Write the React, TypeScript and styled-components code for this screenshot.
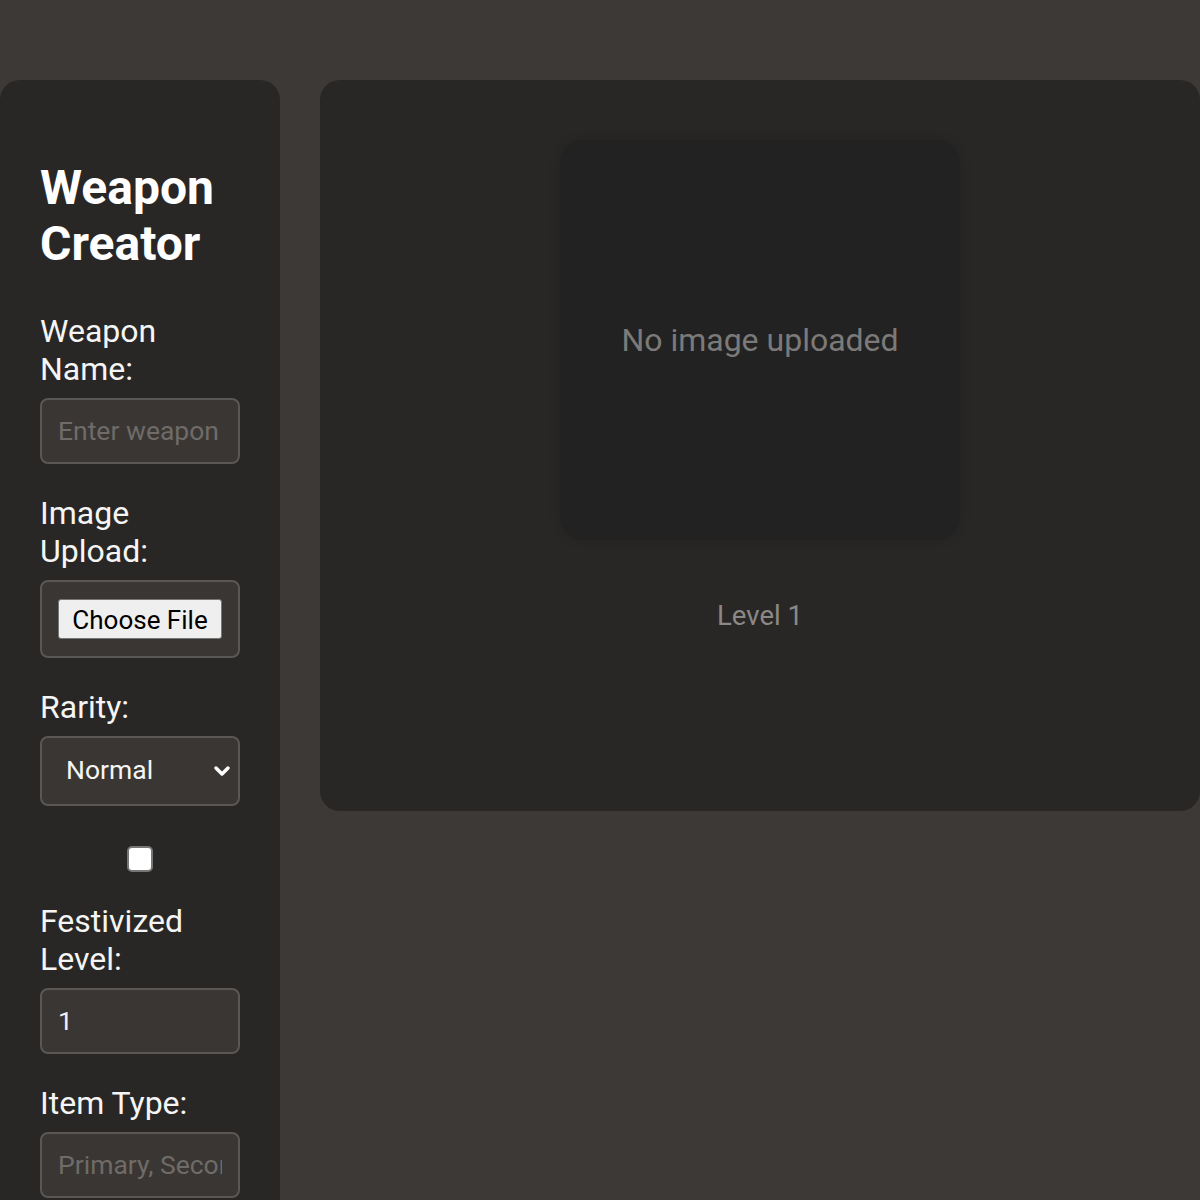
import styled, { createGlobalStyle } from "styled-components";
import { ChevronDown } from "lucide-react";

const GlobalStyle = createGlobalStyle`
  * {
    box-sizing: border-box;
  }
  body {
    margin: 0;
    background: #3d3936;
    font-family: Roboto, "Liberation Sans", sans-serif;
    color: #f5f5f5;
  }
`;

const Field = ({ label, children }: { label: string; children: React.ReactNode }) => (
  <FieldGroup>
    <Label>{label}</Label>
    {children}
  </FieldGroup>
);

export default function App() {
  return (
    <>
      <GlobalStyle />
      <Layout>
        <Sidebar>
          <Title>Weapon Creator</Title>
          <Field label="Weapon Name:">
            <TextInput type="text" placeholder="Enter weapon name" />
          </Field>
          <Field label="Image Upload:">
            <FileBox>
              <FileButton>Choose File</FileButton>
            </FileBox>
          </Field>
          <Field label="Rarity:">
            <SelectWrap>
              <Select defaultValue="normal">
                <option value="normal">Normal</option>
                <option value="unique">Unique</option>
                <option value="strange">Strange</option>
              </Select>
              <Chevron size={24} strokeWidth={3.5} />
            </SelectWrap>
          </Field>
          <CheckRow>
            <Check type="checkbox" />
          </CheckRow>
          <Field label="Festivized Level:">
            <TextInput type="number" defaultValue={1} />
          </Field>
          <Field label="Item Type:">
            <TextInput type="text" placeholder="Primary, Secondary, Melee" />
          </Field>
        </Sidebar>
        <Preview>
          <ImageFrame>No image uploaded</ImageFrame>
          <LevelText>Level 1</LevelText>
        </Preview>
      </Layout>
    </>
  );
}

const Layout = styled.div`
  display: flex;
  align-items: flex-start;
  gap: 40px;
  padding-top: 80px;
`;

const Sidebar = styled.aside`
  width: 280px;
  flex-shrink: 0;
  background: #292725;
  border-radius: 20px;
  padding: 40px 40px 60px;
`;

const Title = styled.h1`
  margin: 40px 0 40px;
  font-size: 48px;
  line-height: 56px;
  font-weight: 700;
  color: #ffffff;
`;

const FieldGroup = styled.div`
  display: flex;
  flex-direction: column;
  gap: 10px;
  margin-bottom: 30px;
`;

const Label = styled.label`
  font-size: 32px;
  line-height: 38px;
  color: #f5f5f5;
`;

const TextInput = styled.input`
  width: 200px;
  height: 66px;
  padding: 0 16px 2px;
  background: #3a3633;
  border: 2px solid #5b5754;
  border-radius: 8px;
  color: #f2f2f2;
  font-family: Roboto, "Liberation Sans", sans-serif;
  font-size: 26.5px;
  outline: none;

  &::placeholder {
    color: #6f6b68;
  }
  &::-webkit-inner-spin-button,
  &::-webkit-outer-spin-button {
    -webkit-appearance: none;
    margin: 0;
  }
  -moz-appearance: textfield;
`;

const FileBox = styled.div`
  width: 200px;
  height: 78px;
  padding: 17px 16px;
  background: #3a3633;
  border: 2px solid #5b5754;
  border-radius: 8px;
  display: flex;
  align-items: center;
`;

const FileButton = styled.span`
  display: inline-flex;
  align-items: center;
  justify-content: center;
  width: 170px;
  height: 40px;
  padding-top: 1px;
  background: #efefef;
  border: 1px solid #767676;
  border-radius: 3px;
  color: #000000;
  font-size: 26px;
`;

const SelectWrap = styled.div`
  position: relative;
  width: 200px;
`;

const Select = styled.select`
  width: 200px;
  height: 70px;
  padding: 0 24px 3px;
  appearance: none;
  background: #3a3633;
  border: 2px solid #5b5754;
  border-radius: 8px;
  color: #f5f5f5;
  font-family: Roboto, "Liberation Sans", sans-serif;
  font-size: 26.5px;
  outline: none;
`;

const Chevron = styled(ChevronDown)`
  position: absolute;
  right: 6px;
  top: 50%;
  transform: translateY(-50%);
  color: #ffffff;
  pointer-events: none;
`;

const CheckRow = styled.div`
  display: flex;
  justify-content: center;
  width: 200px;
  padding-top: 10px;
  margin-bottom: 30px;
`;

const Check = styled.input`
  appearance: none;
  margin: 0;
  width: 26px;
  height: 26px;
  background: #ffffff;
  border: 2px solid #767676;
  border-radius: 5px;
`;

const Preview = styled.main`
  flex: 1;
  min-height: 731px;
  background: #292725;
  border-radius: 20px;
  padding-top: 60px;
  display: flex;
  flex-direction: column;
  align-items: center;
`;

const ImageFrame = styled.div`
  width: 400px;
  height: 400px;
  background: #222222;
  border-radius: 24px;
  box-shadow: 0 0 12px rgba(0, 0, 0, 0.12);
  display: flex;
  align-items: center;
  justify-content: center;
  color: #7c7a78;
  font-size: 32px;
`;

const LevelText = styled.div`
  margin-top: 60px;
  font-size: 27.5px;
  line-height: 32px;
  color: #8b8886;
`;
